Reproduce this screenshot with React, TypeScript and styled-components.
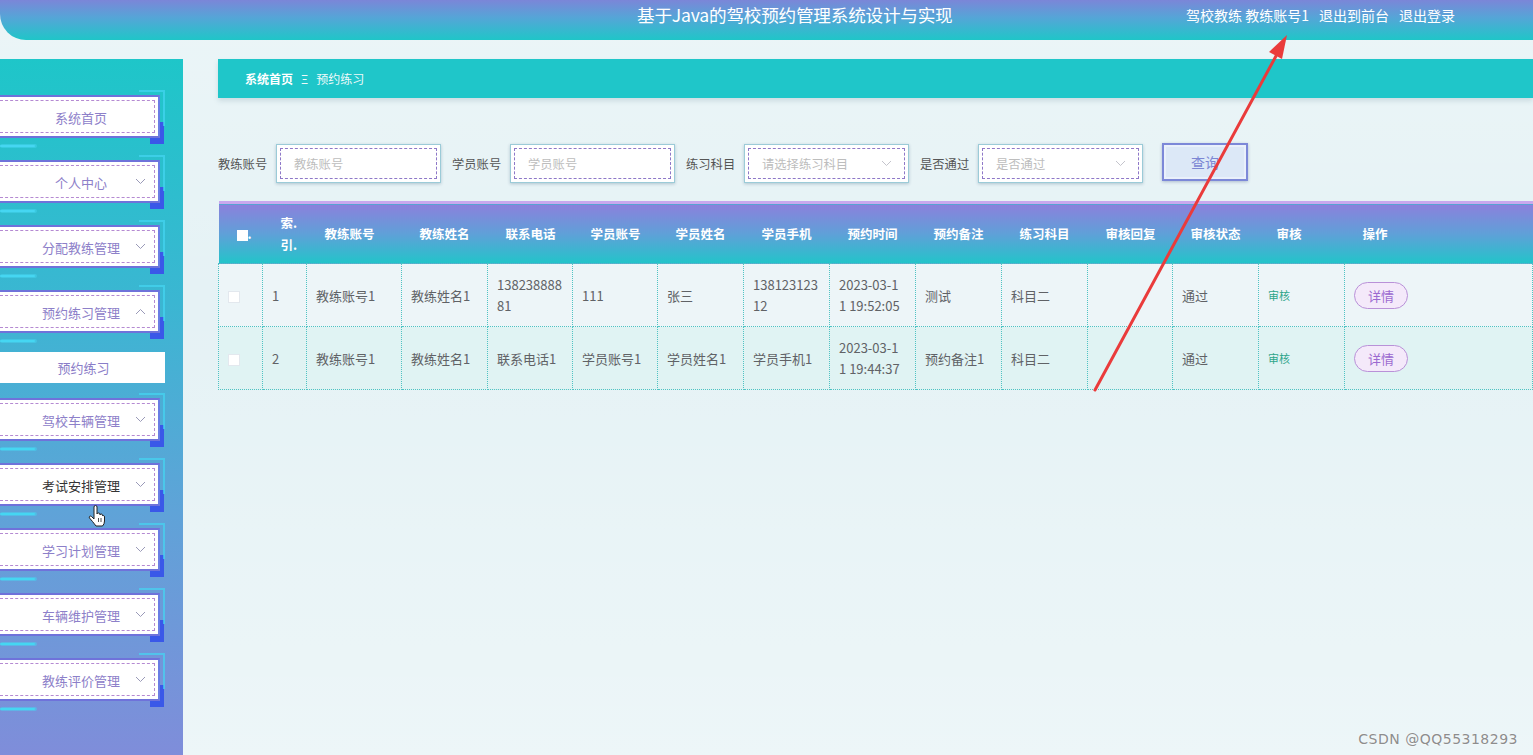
import React from 'react';
import styled, { createGlobalStyle } from 'styled-components';

// - - - - - - GLOBAL

const GlobalStyle = createGlobalStyle`
    html, body {
        margin: 0;
        padding: 0;
    }
    body {
        font-family: "Noto Sans CJK SC", "Noto Sans", sans-serif;
        background: #e4f1f4;
    }
    * {
        box-sizing: border-box;
    }
`;

// - - - - - - STYLED-COMPONENTS

const Page = styled.div`
    position: relative;
    width: 1533px;
    height: 755px;
    overflow: hidden;
    background-color: #e5f2f5;
    background-image: linear-gradient(180deg, rgba(255, 255, 255, 0.25), rgba(255, 255, 255, 0) 40%, rgba(255, 255, 255, 0.3));
`;

const Header = styled.header`
    height: 40px;
    display: flex;
    align-items: flex-start;
    padding: 3px 78px 0 637px;
    background: linear-gradient(180deg, #7b86d8 0%, #54a6d7 45%, #1fc6c8 100%);
    border-bottom-left-radius: 26px;
    color: #fff;
`;

const Title = styled.h1`
    margin: 0;
    font-size: 17.6px;
    font-weight: 400;
    line-height: 24px;
    letter-spacing: -0.2px;
`;

const UserBar = styled.div`
    margin-left: auto;
    display: flex;
    gap: 10px;
    padding-top: 1px;
    font-size: 14px;
    line-height: 22px;
`;

const Layout = styled.div`
    display: flex;
    align-items: flex-start;
    gap: 35px;
    padding-top: 19px;
`;

const Sidebar = styled.aside`
    position: relative;
    isolation: isolate;
    flex-shrink: 0;
    width: 183px;
    height: 696px;
    padding-top: 36px;
    background: linear-gradient(180deg, #1ec6c9 0%, #3bb6d2 35%, #5fa3d8 65%, #7f8dda 100%);
`;

const Menu = styled.nav`
    display: flex;
    flex-direction: column;
`;

const MenuItem = styled.div`
    position: relative;
    width: 160px;
    height: 43px;
    margin-bottom: 22px;

    &::before {
        content: '';
        position: absolute;
        top: -5px;
        right: -5px;
        width: 24px;
        height: 34px;
        border-top: 2px solid rgba(69, 214, 242, 0.7);
        border-right: 2px solid rgba(69, 214, 242, 0.7);
    }

    &::after {
        content: '';
        position: absolute;
        left: 0;
        bottom: -9px;
        width: 35px;
        height: 2px;
        border-radius: 2px;
        background: #45d6f2;
        box-shadow: 1px 0 0 1px rgba(69, 214, 242, 0.5);
    }
`;

const MenuBox = styled.div<{ $active?: boolean }>`
    position: relative;
    height: 100%;
    display: grid;
    grid-template-columns: 1fr auto 1fr;
    align-items: center;
    padding: 0 12px 1px 16px;
    background: #fff;
    border-top: 2px solid #6f72da;
    border-bottom: 2px solid #6f72da;
    border-right: 2px solid #6a7de4;
    font-size: 13px;
    color: ${(p) => (p.$active ? '#333' : '#8d80c9')};

    &::before {
        content: '';
        position: absolute;
        right: -6px;
        bottom: -8px;
        width: 14px;
        height: 22px;
        background: #3a58e8;
        z-index: -1;
    }

    &::after {
        content: '';
        position: absolute;
        top: 3px;
        right: 3px;
        bottom: 3px;
        left: 0;
        border: 1px dashed #b58ad2;
        border-left: none;
        pointer-events: none;
    }
`;

const MenuLabel = styled.span`
    grid-column: 2;
    padding-top: 2px;
`;

const Chevron = styled.svg`
    grid-column: 3;
    justify-self: end;
    width: 11px;
    height: 7px;
`;

const SubItem = styled.div`
    width: 165px;
    height: 31px;
    margin: -3px 0 15px;
    display: flex;
    align-items: center;
    justify-content: center;
    padding-left: 2px;
    background: #fff;
    font-size: 13px;
    color: #8a7dc8;
`;

const Main = styled.main`
    flex: 1;
    min-width: 0;
`;

const Breadcrumb = styled.div`
    height: 39px;
    display: flex;
    align-items: center;
    gap: 8px;
    padding-left: 27px;
    background: #1fc6c9;
    box-shadow: 0 3px 5px rgba(40, 90, 110, 0.15);
    font-size: 12px;
    color: #fff;
`;

const Crumb = styled.span<{ $strong?: boolean }>`
    font-weight: ${(p) => (p.$strong ? 700 : 400)};
    opacity: ${(p) => (p.$strong ? 1 : 0.92)};
`;

const SearchBar = styled.div`
    display: flex;
    align-items: center;
    margin-top: 46px;
    height: 39px;
`;

const Field = styled.div`
    display: flex;
    align-items: center;
    gap: 9px;
    margin-right: 11px;
`;

const Label = styled.label`
    width: 49px;
    font-size: 12.3px;
    color: #555;
    white-space: nowrap;
`;

const Frame = styled.div`
    width: 165px;
    height: 39px;
    padding: 3px;
    background: #fff;
    border: 1px solid #9bcbd8;
    box-shadow: 0 1px 3px rgba(50, 90, 120, 0.3);
`;

const Inner = styled.div`
    height: 100%;
    display: flex;
    align-items: center;
    justify-content: space-between;
    padding: 0 12px 0 13px;
    border: 1px dashed #8e78c8;
    font-size: 12.3px;
    color: #bdbdbd;
`;

const SearchButton = styled.button`
    width: 86px;
    height: 38px;
    margin: -3px 0 0 8px;
    background: #dce8f7;
    border: 2px solid #7c88d8;
    box-shadow: 0 1px 3px rgba(40, 60, 120, 0.3), inset 0 0 0 2px #e9f0fb;
    font-family: inherit;
    font-size: 14px;
    color: #7c86d4;
`;

const Table = styled.table`
    width: 100%;
    margin-top: 18px;
    border-collapse: collapse;
    table-layout: fixed;
`;

const HeadRow = styled.tr`
    border-top: 3px solid #c9a8ee;
`;

const Th = styled.th`
    height: 61px;
    padding: 0 0 0 18px;
    background: linear-gradient(180deg, #8b80dc 0%, #5fa0d8 50%, #22c4c9 100%);
    color: #fff;
    font-size: 12.5px;
    font-weight: 700;
    text-align: left;
    line-height: 22px;
`;

const Row = styled.tr<{ $alt?: boolean }>`
    background: ${(p) => (p.$alt ? '#e0f3f3' : '#edf5f8')};
`;

const Td = styled.td`
    height: 63px;
    padding: 0 6px 0 9px;
    border: 1px dotted #4fc3c3;
    font-size: 13px;
    line-height: 21px;
    color: #606266;
`;

const Wrap = styled.span`
    display: block;
    max-width: 9.05ch;
    word-break: break-all;
`;

const Check = styled.span<{ $head?: boolean }>`
    display: inline-block;
    width: ${(p) => (p.$head ? '11px' : '12px')};
    height: ${(p) => (p.$head ? '11px' : '12px')};
    background: #fff;
    border: 1px solid ${(p) => (p.$head ? '#fff' : '#e3e8ee')};
    vertical-align: middle;
`;

const AuditLink = styled.span`
    font-size: 11px;
    color: #2ea58a;
`;

const DetailButton = styled.button`
    width: 54px;
    height: 27px;
    border-radius: 14px;
    border: 1px solid #b991d8;
    background: #f4e9fa;
    font-family: inherit;
    font-size: 13px;
    color: #9b6ad0;
`;

const Overlay = styled.svg`
    position: absolute;
    top: 0;
    left: 0;
    width: 1533px;
    height: 755px;
    pointer-events: none;
`;

const Watermark = styled.div`
    position: absolute;
    right: 15px;
    bottom: 8px;
    font-family: "DejaVu Sans", "Liberation Sans", sans-serif;
    font-size: 14px;
    letter-spacing: 0.5px;
    color: #8d8d8d;
    text-shadow: 0 0 2px #fff;
`;

// - - - - - - - - - - - - - - -

const menus: { label: string; arrow?: 'down' | 'up'; active?: boolean; sub?: string }[] = [
    { label: '系统首页' },
    { label: '个人中心', arrow: 'down' },
    { label: '分配教练管理', arrow: 'down' },
    { label: '预约练习管理', arrow: 'up', sub: '预约练习' },
    { label: '驾校车辆管理', arrow: 'down' },
    { label: '考试安排管理', arrow: 'down', active: true },
    { label: '学习计划管理', arrow: 'down' },
    { label: '车辆维护管理', arrow: 'down' },
    { label: '教练评价管理', arrow: 'down' },
];

const columns = [44, 44, 95, 86, 85, 85, 86, 86, 86, 86, 86, 85, 86, 86];

const headers = ['教练账号', '教练姓名', '联系电话', '学员账号', '学员姓名', '学员手机', '预约时间', '预约备注', '练习科目', '审核回复', '审核状态', '审核', '操作'];

const rows = [
    ['1', '教练账号1', '教练姓名1', '13823888881', '111', '张三', '13812312312', '2023-03-11 19:52:05', '测试', '科目二', '', '通过'],
    ['2', '教练账号1', '教练姓名1', '联系电话1', '学员账号1', '学员姓名1', '学员手机1', '2023-03-11 19:44:37', '预约备注1', '科目二', '', '通过'],
];

const ArrowIcon = ({ up }: { up?: boolean }) => (
    <Chevron viewBox="0 0 11 7">
        <path
            d={up ? 'M1 6 L5.5 1.5 L10 6' : 'M1 1 L5.5 5.5 L10 1'}
            fill="none"
            stroke="#9a9ab8"
            strokeWidth="1"
        />
    </Chevron>
);

const SelectChevron = () => (
    <svg width="11" height="7" viewBox="0 0 11 7">
        <path d="M1 1 L5.5 5.5 L10 1" fill="none" stroke="#c4c4cc" strokeWidth="1" />
    </svg>
);

const App = () => {
    return (
        <Page>
            <GlobalStyle />
            <Header>
                <Title>基于Java的驾校预约管理系统设计与实现</Title>
                <UserBar>
                    <span>驾校教练 教练账号1</span>
                    <span>退出到前台</span>
                    <span>退出登录</span>
                </UserBar>
            </Header>
            <Layout>
                <Sidebar>
                    <Menu>
                        {menus.map((m) => (
                            <React.Fragment key={m.label}>
                                <MenuItem>
                                    <MenuBox $active={m.active}>
                                        <MenuLabel>{m.label}</MenuLabel>
                                        {m.arrow && <ArrowIcon up={m.arrow === 'up'} />}
                                    </MenuBox>
                                </MenuItem>
                                {m.sub && <SubItem>{m.sub}</SubItem>}
                            </React.Fragment>
                        ))}
                    </Menu>
                </Sidebar>
                <Main>
                    <Breadcrumb>
                        <Crumb $strong>系统首页</Crumb>
                        <Crumb>Ξ</Crumb>
                        <Crumb>预约练习</Crumb>
                    </Breadcrumb>
                    <SearchBar>
                        <Field>
                            <Label>教练账号</Label>
                            <Frame>
                                <Inner>教练账号</Inner>
                            </Frame>
                        </Field>
                        <Field>
                            <Label>学员账号</Label>
                            <Frame>
                                <Inner>学员账号</Inner>
                            </Frame>
                        </Field>
                        <Field>
                            <Label>练习科目</Label>
                            <Frame>
                                <Inner>
                                    请选择练习科目
                                    <SelectChevron />
                                </Inner>
                            </Frame>
                        </Field>
                        <Field>
                            <Label>是否通过</Label>
                            <Frame>
                                <Inner>
                                    是否通过
                                    <SelectChevron />
                                </Inner>
                            </Frame>
                        </Field>
                        <SearchButton>查询</SearchButton>
                    </SearchBar>
                    <Table>
                        <colgroup>
                            {columns.map((w, i) => (
                                <col key={i} style={{ width: w }} />
                            ))}
                            <col />
                        </colgroup>
                        <thead>
                            <HeadRow>
                                <Th>
                                    <Check $head />.
                                </Th>
                                <Th>索.引.</Th>
                                {headers.map((h) => (
                                    <Th key={h}>{h}</Th>
                                ))}
                            </HeadRow>
                        </thead>
                        <tbody>
                            {rows.map((r, i) => (
                                <Row key={r[0]} $alt={i % 2 === 1}>
                                    <Td>
                                        <Check />
                                    </Td>
                                    {r.map((c, j) => (
                                        <Td key={j}>{j === 3 || j === 6 || j === 7 ? <Wrap>{c}</Wrap> : c}</Td>
                                    ))}
                                    <Td>
                                        <AuditLink>审核</AuditLink>
                                    </Td>
                                    <Td>
                                        <DetailButton>详情</DetailButton>
                                    </Td>
                                </Row>
                            ))}
                        </tbody>
                    </Table>
                </Main>
            </Layout>
            <Overlay viewBox="0 0 1533 755">
                <line x1="1095" y1="390" x2="1276" y2="56" stroke="#ea3b3b" strokeWidth="3" strokeLinecap="round" />
                <polygon points="1287,35 1282,59 1269,52" fill="#ea3b3b" />
                <g transform="translate(88 505)">
                    <path
                        d="M6 2 Q6 0.5 7.5 0.5 Q9 0.5 9 2 L9 9 Q9 8 10.5 8 Q12 8 12 9.5 L12 10 Q12 9 13.3 9 Q14.5 9 14.5 10.5 L14.5 11 Q14.7 10.3 15.6 10.5 Q16.5 10.8 16.5 12 L16.5 16 Q16.5 19 14.5 21 L8 21 Q6.5 19 4.5 16.5 L1.5 13 Q0.8 12 1.7 11.3 Q2.6 10.7 3.6 11.6 L6 14 Z"
                        fill="#fff"
                        stroke="#222"
                        strokeWidth="1"
                        strokeLinejoin="round"
                    />
                    <path d="M10.5 13 L10.5 17 M13 13 L13 17" stroke="#222" strokeWidth="0.8" />
                </g>
            </Overlay>
            <Watermark>CSDN @QQ55318293</Watermark>
        </Page>
    );
};

export default App;
